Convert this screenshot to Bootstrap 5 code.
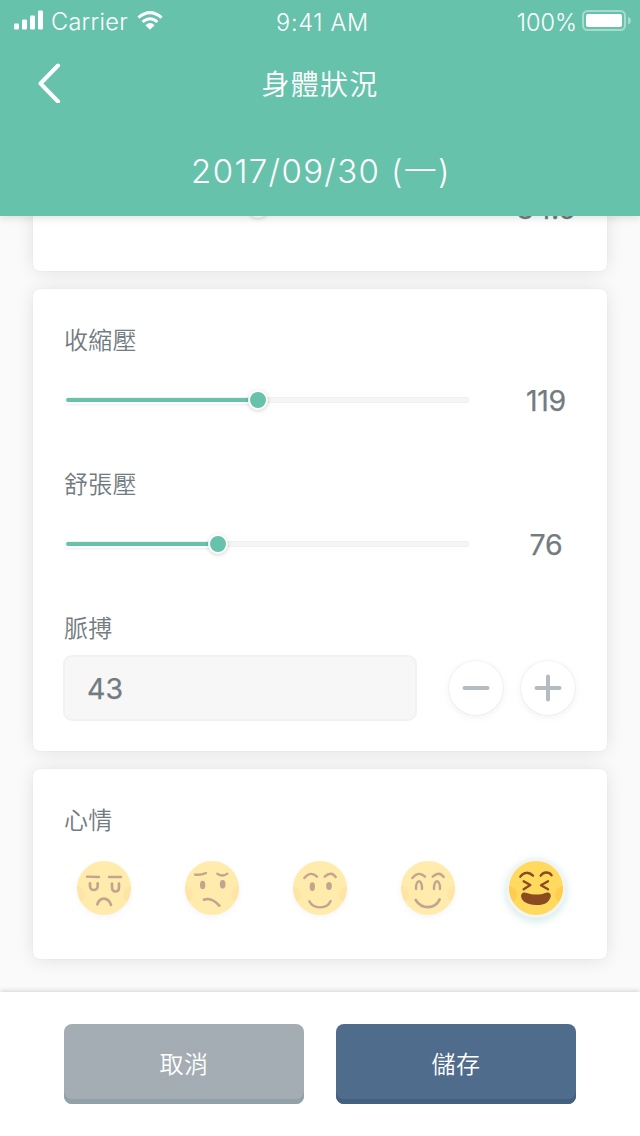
<!DOCTYPE html>
<html lang="zh-Hant">
<head>
<meta charset="utf-8">
<meta name="viewport" content="width=device-width, initial-scale=1">
<title>身體狀況</title>
<link href="https://cdn.jsdelivr.net/npm/bootstrap@5.3.0/dist/css/bootstrap.min.css" rel="stylesheet">
<style>
  :root { --mint: #67c2ab; --ink: #727b80; }
  body { font-family: Inter, "Noto Sans CJK TC", sans-serif; background: #fafafa; color: var(--ink); height: 1136px; }
  .app-header { background: var(--mint); height: 216px; z-index: 2; box-shadow: 0 2px 8px rgba(0,0,0,.12); }
  .status-bar { height: 44px; font-size: 23.5px; line-height: 46px; padding: 0 9px 0 14px; font-weight: 350; }
  .carrier { letter-spacing: .3px; margin-left: 7px; margin-right: 9px; line-height: 44px; }
  .clock { letter-spacing: .7px; }
  .title-bar { height: 80px; padding: 0 37px; }
  .page-title { font-size: 28px; letter-spacing: 1.3px; font-weight: 350; line-height: 82px; }
  .date-line { font-size: 33px; letter-spacing: 1.35px; font-weight: 300; line-height: 94px; padding-left: 2px; }
  .cards { padding: 0 33px 33px; gap: 18px; }
  .panel { border: 0; border-radius: 7px; flex: none; box-shadow: 0 1px 18px rgba(0,0,0,.1), 0 0 2px rgba(0,0,0,.06); padding: 33px 31px 0; }
  .field-label { font-size: 24px; line-height: 38px; font-weight: 350; height: 36px; letter-spacing: .2px; }
  .slider-row { height: 40px; margin-top: 22px; margin-bottom: 46px; padding-left: 2px; }
  .rail { width: 403px; height: 6px; border-radius: 3px; background: #f5f5f5; box-shadow: inset 0 0 0 1px #f1f1f1; }
  .rail-fill { height: 4px; border-radius: 2px; background: var(--mint); box-shadow: 0 2px 0 #fff, 0 3px 3px rgba(0,0,0,.08); }
  .knob { width: 20px; height: 20px; border-radius: 50%; background: var(--mint); border: 2px solid #fff; box-shadow: 0 1px 4px rgba(0,0,0,.18); }
  .reading { width: 108px; font-size: 28.5px; line-height: 40px; padding-top: 2px; font-weight: 400; -webkit-text-stroke: .25px currentColor; margin-left: auto; text-align: center; margin-right: -24px; letter-spacing: -.3px; }
  .pulse-box { width: 354px; height: 66px; background: #f7f7f7; border: 2px solid #f2f2f2; border-radius: 9px; font-size: 28.5px; font-weight: 400; -webkit-text-stroke: .25px currentColor; color: var(--ink); padding: 0 22px; margin-left: -1px; }
  .round-btn { width: 54px; height: 54px; border-radius: 50%; background: #fff; border: 0; padding: 0; box-shadow: 0 2px 8px rgba(0,0,0,.06), 0 0 1px 1px rgba(225,230,234,.35); }
  .moods { padding: 22px 12px 43px; }
  .mood { width: 56px; height: 56px; overflow: visible; }
  .mood-off { opacity: .5; filter: drop-shadow(0 2px 3px rgba(0,0,0,.09)); }
  .mood-on { filter: drop-shadow(0 3px 4px rgba(86,180,165,.28)); }
  .ln { fill: none; stroke: #8a4b20; stroke-width: 8; stroke-linecap: round; stroke-linejoin: round; }
  .brow { stroke-width: 7; }
  .dot { fill: #8a4b20; }
  .app-footer { height: 144px; padding: 32px 64px; gap: 32px; z-index: 2; box-shadow: 0 -1px 5px rgba(0,0,0,.16); }
  .act { height: 80px; border: 0; border-radius: 8px; color: #fff; font-size: 24px; font-weight: 350; letter-spacing: .6px; padding: 1px 0 0; }
  .act:hover { color: #fff; }
  .act-cancel { background: #a3adb3; box-shadow: inset 0 -5px 0 #92a0aa; }
  .act-save { background: #4f6c8c; box-shadow: inset 0 -5px 0 #446081; }
</style>
<script src="https://cdn.jsdelivr.net/npm/bootstrap@5.3.0/dist/js/bootstrap.bundle.min.js"></script>
</head>
<body class="d-flex flex-column overflow-hidden">
<header class="app-header text-white position-relative flex-shrink-0">
  <div class="status-bar row g-0">
    <div class="col d-flex">
      <svg width="30" height="20" viewBox="0 0 30 20" style="margin-top:9.5px" fill="#fff"><rect y="13.5" width="5" height="6" rx="1.2"/><rect x="8" y="9.5" width="5" height="10" rx="1.2"/><rect x="16" y="5.500" width="5" height="14" rx="1.2"/><rect x="24" y=".5" width="5" height="19" rx="1.2"/></svg>
      <span class="carrier">Carrier</span>
      <svg width="26" height="19" viewBox="0 0 26 19" style="margin-top:10.5px" fill="none" stroke="#fff" stroke-width="3"><path d="M1.4 6.7Q13-3.5 24.6 6.7"/><path d="M5.6 11Q13 4.4 20.4 11"/><path d="M8.4 14.2Q13 10 17.6 14.2L13 18.7Z" fill="#fff" stroke="none"/></svg>
    </div>
    <div class="col-auto clock">9:41 AM</div>
    <div class="col d-flex justify-content-end">
      <span class="me-1">100%</span>
      <svg width="50" height="22" viewBox="0 0 50 22" style="margin-top:9px"><rect x="2" y="2" width="42" height="19" rx="4.5" fill="none" stroke="#fff" stroke-opacity=".42" stroke-width="2"/><rect x="5" y="5" width="36" height="13" rx="2" fill="#fff"/><path d="M47 8q3 1 3 3.700T47 15.500z" fill="#fff" fill-opacity=".42"/></svg>
    </div>
  </div>
  <div class="title-bar row g-0">
    <div class="col d-flex align-items-center"><svg class="mb-1" width="24" height="40" viewBox="0 0 24 40" fill="none" stroke="#fff" stroke-width="4" stroke-linecap="round" stroke-linejoin="round"><path d="M21 3 3.500 21 21 39" transform="translate(0 -.5)"/></svg></div>
    <h1 class="page-title col-auto m-0">身體狀況</h1>
    <div class="col"></div>
  </div>
  <div class="date-line text-center">2017/09/30 (一)</div>
</header>

<main class="cards d-flex flex-column justify-content-end flex-grow-1 overflow-hidden">
  <section class="card panel">
    <div class="field-label">體溫</div>
    <div class="slider-row d-flex align-items-center" style="margin-bottom:43px">
      <div class="rail d-flex align-items-center"><div class="rail-fill d-flex align-items-center justify-content-end" style="width:50%"><div class="knob flex-shrink-0"></div></div></div>
      <div class="reading">34.5</div>
    </div>
  </section>

  <section class="card panel">
    <div class="field-label">收縮壓</div>
    <div class="slider-row d-flex align-items-center">
      <div class="rail d-flex align-items-center"><div class="rail-fill d-flex align-items-center justify-content-end" style="width:50%"><div class="knob flex-shrink-0"></div></div></div>
      <div class="reading">119</div>
    </div>
    <div class="field-label">舒張壓</div>
    <div class="slider-row d-flex align-items-center">
      <div class="rail d-flex align-items-center"><div class="rail-fill d-flex align-items-center justify-content-end" style="width:40.2%"><div class="knob flex-shrink-0"></div></div></div>
      <div class="reading">76</div>
    </div>
    <div class="field-label">脈搏</div>
    <div class="d-flex align-items-center" style="margin:9px 0 30px">
      <input class="pulse-box" value="43" aria-label="脈搏">
      <div class="d-flex ms-auto" style="gap:18px;margin-right:1px">
        <button class="round-btn" aria-label="減"><svg class="d-block m-auto" width="28" height="28" stroke="#b4bcc2" stroke-width="4" stroke-linecap="round"><path d="M2.500 14h23"/></svg></button>
        <button class="round-btn" aria-label="加"><svg class="d-block m-auto" width="28" height="28" stroke="#b4bcc2" stroke-width="4" stroke-linecap="round"><path d="M2.500 14h23M14 2.500v23"/></svg></button>
      </div>
    </div>
  </section>

  <section class="card panel">
    <div class="field-label">心情</div>
    <div class="moods d-flex justify-content-between">
      <svg class="mood mood-off" viewBox="-84 -84 168 168">
        <defs>
          <clipPath id="disc"><circle r="81"/></clipPath>
          <g id="face"><circle r="81" fill="#ffda5e"/><g clip-path="url(#disc)" fill="#ffcd4e"><circle cx="-83" cy="20" r="26"/><circle cx="83" cy="20" r="26"/></g></g>
        </defs>
        <use href="#face"/>
        <path class="ln brow" d="M-51-34-15-33M15-33H51"/>
        <path class="ln" d="M-42-14V-6C-42 10-19 10-19-6V-14M24-13V-3C24 15 45 15 45-3V-13"/>
        <path class="ln" d="M-20 49C-13 26 13 26 21 51"/>
      </svg>
      <svg class="mood mood-off" viewBox="-84 -84 168 168">
        <use href="#face"/>
        <path class="ln brow" d="M-51-40Q-30-39-18-45M16-43Q32-32 46-43"/>
        <ellipse class="dot" cx="-28" cy="-9" rx="8" ry="13"/><ellipse class="dot" cx="32" cy="-11" rx="8.500" ry="13"/>
        <path class="ln" d="M-24 35C-10 29 8 37 22 53"/>
      </svg>
      <svg class="mood mood-off" viewBox="-84 -84 168 168">
        <use href="#face"/>
        <path class="ln brow" d="M-47-30Q-28-53-9-34M14-34Q34-52 47-33"/>
        <ellipse class="dot" cx="-23" cy="-4" rx="8" ry="13"/><ellipse class="dot" cx="27" cy="-6" rx="8.500" ry="12"/>
        <path class="ln brow" d="M-32 40C-20 64 21 64 32 39"/>
      </svg>
      <svg class="mood mood-off" viewBox="-84 -84 168 168">
        <use href="#face"/>
        <path class="ln brow" d="M-47-30Q-28-53-9-34M14-34Q34-52 47-33"/>
        <path class="ln brow" d="M-36 3C-37-28-17-28-18 3M18 3C17-28 37-28 36 3"/>
        <path class="ln" d="M-37 36C-18 65 20 65 35 34"/>
      </svg>
      <svg class="mood mood-on" viewBox="-84 -84 168 168">
        <circle r="90" fill="#f3f4f4"/>
        <use href="#face"/>
        <path class="ln brow" d="M-47-34C-37-49-21-49-9-37M14-37C22-49 38-50 47-38"/>
        <path class="ln brow" d="M-37-20-17-9-37 4M36-20 15-8 36 4"/>
        <path class="dot" d="M-45 25C-45 13-36 11-27 15-9 21 13 21 27 15 37 10 47 16 44 27 37 46 23 52 0 51-26 50-42 42-45 25Z"/>
      </svg>
    </div>
  </section>
</main>

<footer class="app-footer bg-white d-flex position-relative flex-shrink-0">
  <button class="btn act act-cancel flex-fill w-50">取消</button>
  <button class="btn act act-save flex-fill w-50">儲存</button>
</footer>
</body>
</html>
